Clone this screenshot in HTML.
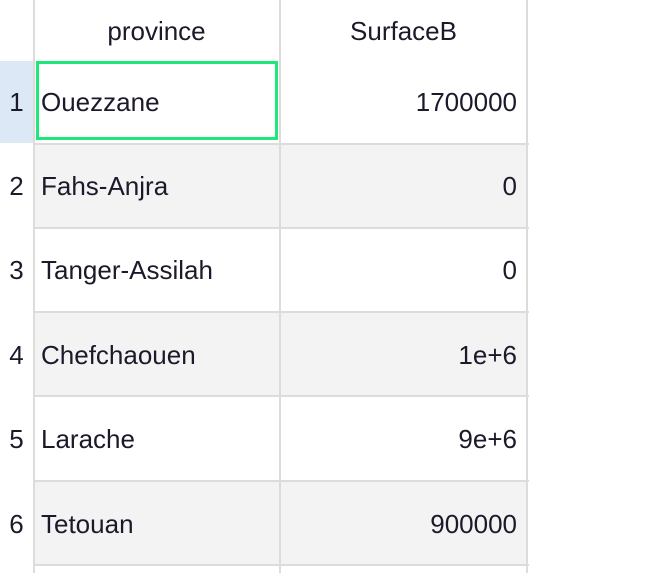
<!DOCTYPE html>
<html><head><style>
body{margin:0;width:662px;height:573px;background:#fff;position:relative;overflow:hidden;font-family:"Liberation Sans",sans-serif;color:#1a1a2a;font-size:26px}
.a{position:absolute}
.vl{position:absolute;top:0;width:2px;height:573px;background:#dcdcdc}
.hl{position:absolute;left:33px;width:496px;height:2px;background:#dcdcdc}
.r{position:absolute;left:35px;width:492px;height:82px;background:#f3f3f3}
.n{position:absolute;left:0;width:33px;text-align:center}
.t{position:absolute;left:41px}
.v{position:absolute;right:145px}
</style></head><body>
<div class="a" style="left:0;top:61px;width:33px;height:82px;background:#dce8f5"></div>
<div class="r" style="top:145px"></div>
<div class="r" style="top:313px"></div>
<div class="r" style="top:482px"></div>
<div class="vl" style="left:33px"></div>
<div class="vl" style="left:279px"></div>
<div class="vl" style="left:526px"></div>
<div class="hl" style="top:143px"></div>
<div class="hl" style="top:227px"></div>
<div class="hl" style="top:311px"></div>
<div class="hl" style="top:395px"></div>
<div class="hl" style="top:480px"></div>
<div class="hl" style="top:564px"></div>
<div class="a" style="left:36px;top:61px;width:236px;height:73px;border:3px solid #1ee87a"></div>
<div class="a" style="left:33px;width:247px;top:16px;text-align:center">province</div>
<div class="a" style="left:280px;width:247px;top:16px;text-align:center">SurfaceB</div>
<div class="n" style="top:87px">1</div><div class="t" style="top:87px">Ouezzane</div><div class="v" style="top:87px">1700000</div>
<div class="n" style="top:171px">2</div><div class="t" style="top:171px">Fahs-Anjra</div><div class="v" style="top:171px">0</div>
<div class="n" style="top:255px">3</div><div class="t" style="top:255px">Tanger-Assilah</div><div class="v" style="top:255px">0</div>
<div class="n" style="top:340px">4</div><div class="t" style="top:340px">Chefchaouen</div><div class="v" style="top:340px">1e+6</div>
<div class="n" style="top:424px">5</div><div class="t" style="top:424px">Larache</div><div class="v" style="top:424px">9e+6</div>
<div class="n" style="top:509px">6</div><div class="t" style="top:509px">Tetouan</div><div class="v" style="top:509px">900000</div>
</body></html>
